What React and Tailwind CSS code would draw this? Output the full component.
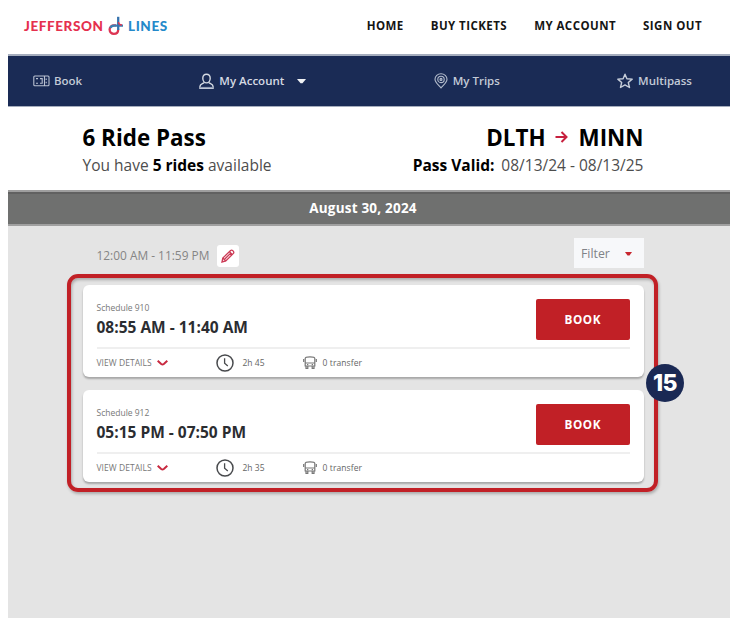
import React from "react";

function LogoMark() {
  return (
    <svg className="ml-[4px] mr-[4px] h-[20px] w-[16px] shrink-0" viewBox="0 0 16 20" fill="none" strokeWidth="2.3">
      <path d="M8 9.4H6.2A4.2 4.2 0 0 0 1.6 13.6A4.2 4.2 0 0 0 5.8 17.8C8.6 17.8 10.2 16 10.2 13.4" stroke="#dd3553" />
      <path d="M2.4 12C3 10 4.4 9.6 6 9.6H15" stroke="#3d7fb3" />
      <path d="M10.2 0.8V14" stroke="#3672ad" />
      <path d="M10.4 6C10.6 8 11.8 9 14 9" stroke="#dd3553" strokeWidth="1.4" />
    </svg>
  );
}

function TicketIcon() {
  return (
    <svg className="h-[12px] w-[17px]" viewBox="0 0 17 12" fill="none" stroke="#b9c1d1" strokeWidth="1.1">
      <rect x="0.8" y="1" width="15.2" height="9.8" rx="1" />
      <path d="M11.5 1v10M3 3.6h2M3 8.3h2M7 3.6h2.2v4.6H7M13.2 3.6v1.5M13.2 6.8v1.5" />
    </svg>
  );
}

function UserIcon() {
  return (
    <svg className="h-[17px] w-[15px]" viewBox="0 0 15 17" fill="none" stroke="#d5dae3" strokeWidth="1.4">
      <path d="M7.5 1.2C5.2 1.2 3.8 2.7 3.8 5.2C3.8 7.8 5.4 9.9 7.5 9.9S11.2 7.8 11.2 5.2C11.2 2.7 9.8 1.2 7.5 1.2Z" />
      <path d="M5 9.3C4.8 10.8 1 10.5 1 13.2V15.3H14V13.2C14 10.5 10.2 10.8 10 9.3" />
      <path d="M1 14.6H14" stroke="#8f9bb5" />
    </svg>
  );
}

function PinIcon() {
  return (
    <svg className="h-[16px] w-[14px]" viewBox="0 0 14 16" fill="none" stroke="#b4bdcd" strokeWidth="1.1">
      <path d="M7 15C4.5 12 1 9.6 1 6.3A6 5.5 0 0 1 13 6.3C13 9.6 9.5 12 7 15Z" />
      <circle cx="7" cy="6.4" r="3.2" />
      <circle cx="7" cy="6.4" r="1" />
    </svg>
  );
}

function StarIcon() {
  return (
    <svg className="h-[16px] w-[16px]" viewBox="0 0 16 16" fill="none" stroke="#c6cdd9" strokeWidth="1.4" strokeLinejoin="round">
      <path d="M8 1.2L9.9 5.7L15.2 6.1L11.3 9.5L12.5 14.5L8 11.9L3.5 14.5L4.7 9.5L0.8 6.1L6.1 5.7Z" />
    </svg>
  );
}

function ClockIcon() {
  return (
    <svg className="h-[18px] w-[18px]" viewBox="0 0 18 18" fill="none" stroke="#484a4d" strokeWidth="1.5">
      <circle cx="9" cy="9" r="8" />
      <path d="M8.6 4.2V9.2L11.8 12" strokeWidth="1.3" />
    </svg>
  );
}

function BusIcon() {
  return (
    <svg className="h-[13px] w-[14px]" viewBox="0 0 14 13" fill="none" stroke="#777" strokeWidth="1.2">
      <path d="M2.2 10V2.4C2.2 1.3 4 0.8 7 0.8S11.8 1.3 11.8 2.4V10Z" />
      <path d="M2.2 7H11.8M0.7 3V6M13.3 3V6M4 8.6H5.3M8.7 8.6H10" />
      <path d="M3 10V12.3H4.8V10M9.2 10V12.3H11V10" />
    </svg>
  );
}

function Trip({ schedule, time, duration }) {
  return (
    <div className="h-[91.5px] rounded-[6px] bg-white pl-[13.5px] pr-[14px] shadow-[0_2px_2px_rgba(0,0,0,0.27)]">
      <div className="flex h-[62px] justify-between">
        <div className="pt-[17px]">
          <div className="h-[12px] whitespace-nowrap text-[8.5px] leading-[12px] text-[#777]">{schedule}</div>
          <div className="mt-[2.5px] h-[20px] whitespace-nowrap text-[15.5px] leading-[20px] font-bold text-[#2b2d31]">{time}</div>
        </div>
        <button className="mt-[13.5px] h-[41.5px] w-[94.5px] rounded-[2px] bg-[#c12026] pt-[1px] text-[11.7px] font-bold tracking-[0.6px] text-white">
          BOOK
        </button>
      </div>
      <div className="h-[1.5px] bg-[#efefef]" />
      <div className="flex h-[28px] items-center whitespace-nowrap text-[8.5px] text-[#666]">
        <div className="flex w-[119px] items-center">
          <span className="w-[60px] pt-[1px] tracking-[0.05px] text-[#777]">VIEW DETAILS</span>
          <svg className="h-[6px] w-[11px]" viewBox="0 0 11 6" fill="none" stroke="#c8283f" strokeWidth="2">
            <path d="M0.7 0.8L4.2 4Q5.5 5 6.8 4L10.3 0.8" />
          </svg>
        </div>
        <div className="flex w-[87px] items-center gap-[9px]">
          <ClockIcon />
          <span className="pt-[1px]">{duration}</span>
        </div>
        <div className="flex items-center gap-[6px]">
          <BusIcon />
          <span className="pt-[1px] tracking-[0.1px]">0 transfer</span>
        </div>
      </div>
    </div>
  );
}

export default function App() {
  return (
    <div className="h-[622px] w-[742px] overflow-hidden bg-white pl-[8px] pr-[12px] font-['Open_Sans',sans-serif]">
      <header className="flex h-[54px] items-center justify-between pl-[16px] pr-[28px] pb-[2px]">
        <div className="flex items-center font-['Lato',sans-serif] text-[13.5px] font-black whitespace-nowrap">
          <span className="w-[80px] tracking-[0.6px] text-[#e5304e]">JEFFERSON</span>
          <LogoMark />
          <span className="tracking-[0.6px] text-[#2489ca]">LINES</span>
        </div>
        <nav className="flex gap-[27px] whitespace-nowrap text-[11.5px] font-bold tracking-[0.45px] text-[#151515]">
          <span>HOME</span>
          <span>BUY TICKETS</span>
          <span>MY ACCOUNT</span>
          <span>SIGN OUT</span>
        </nav>
      </header>

      <nav className="flex h-[53px] items-center justify-between border-t-2 border-b border-t-[#a5adbd] border-b-[#a5adbd] bg-[#1a2b55] pl-[25px] pr-[38px] text-[11.5px] font-semibold whitespace-nowrap text-[#c3cad7]">
        <div className="flex w-[166px] items-center gap-[4px]">
          <TicketIcon />
          Book
        </div>
        <div className="flex w-[234px] items-center gap-[5px] text-[#d5dae3]">
          <UserIcon />
          <span>My Account</span>
          <svg className="ml-[8px] h-[5px] w-[9px]" viewBox="0 0 9 5">
            <path d="M0 0H9L5.5 4.2H3.5Z" fill="#f0f2f5" />
          </svg>
        </div>
        <div className="flex w-[183px] items-center gap-[5px]">
          <PinIcon />
          My Trips
        </div>
        <div className="flex items-center gap-[5px]">
          <StarIcon />
          Multipass
        </div>
      </nav>

      <section className="flex h-[83px] justify-between pl-[74.5px] pr-[86.5px] pt-[15px] whitespace-nowrap text-black">
        <div>
          <div className="h-[30px] text-[22.4px] leading-[31px] font-bold">6 Ride Pass</div>
          <div className="h-[26px] text-[15.5px] leading-[26px] text-[#4d4d4d]">
            You have <b className="text-black">5 rides</b> available
          </div>
        </div>
        <div className="text-right">
          <div className="flex h-[30px] items-center justify-end text-[22.4px] leading-[31px] font-bold">
            DLTH
            <svg className="ml-[9px] mr-[11px] h-[12px] w-[13px]" viewBox="0 0 13 12" fill="none" stroke="#c7203e" strokeWidth="2">
              <path d="M0.5 6H11.5M6.5 1L11.5 6L6.5 11" />
            </svg>
            MINN
          </div>
          <div className="h-[26px] text-[15.5px] leading-[26px] text-[#4d4d4d]">
            <b className="mr-[7px] text-black">Pass Valid:</b>08/13/24 - 08/13/25
          </div>
        </div>
      </section>

      <div className="flex h-[36px] items-center justify-center border-t-2 border-b-2 border-t-[#9f9f9f] border-b-[#a0a0a0] bg-[#6f706f] pt-[1px] pr-[12px] text-[13.5px] font-bold tracking-[0.2px] text-white shadow-[inset_0_2px_0_#616161]">
        August 30, 2024
      </div>

      <main className="h-[392px] bg-[#e4e4e4]">
        <div className="flex h-[48px] items-start justify-between pl-[88.5px] pr-[86px]">
          <div className="flex items-center pt-[19px] text-[11.9px] whitespace-nowrap text-[#858585]">
            <span className="w-[120px]">12:00 AM - 11:59 PM</span>
            <span className="flex h-[22px] w-[22px] items-center justify-center rounded-[3px] bg-white">
              <svg className="h-[14px] w-[14px]" viewBox="0 0 14 14" fill="none" stroke="#cc3b56" strokeWidth="1.3">
                <path d="M1 13L1.8 9L9.6 1.6Q10.6 0.8 11.6 1.6L12.4 2.4Q13.2 3.4 12.4 4.4L4.8 12Z" />
                <path d="M8.5 2.8L11.2 5.5M3.8 10L9.7 4.2M1.8 9L4.8 12" />
              </svg>
            </span>
          </div>
          <div className="mt-[12px] flex h-[30px] w-[70px] items-center justify-between bg-[#f7f8fa] pt-[2px] pl-[7px] pr-[12px] text-[12.3px] text-[#808388]">
            Filter
            <svg className="h-[4px] w-[7px]" viewBox="0 0 7 4">
              <path d="M0 0H7L4.5 3.5H2.5Z" fill="#c7262e" />
            </svg>
          </div>
        </div>

        <div className="relative ml-[59px] flex h-[218px] w-[591px] flex-col gap-[13.5px] rounded-[11px] border-4 border-[#c12026] pt-[7px] pr-[10px] pl-[12px] shadow-[1px_2px_3px_rgba(0,0,0,0.25),inset_1px_2px_3px_rgba(0,0,0,0.25)]">
          <Trip schedule="Schedule 910" time="08:55 AM - 11:40 AM" duration="2h 45" />
          <Trip schedule="Schedule 912" time="05:15 PM - 07:50 PM" duration="2h 35" />
          <div className="absolute top-[86px] left-[575px] flex h-[38px] w-[38px] items-center justify-center rounded-full bg-[#1a2954] font-['Inter',sans-serif] text-[23px] font-extrabold tracking-[-0.5px] text-white">
            15
          </div>
        </div>
      </main>
    </div>
  );
}
